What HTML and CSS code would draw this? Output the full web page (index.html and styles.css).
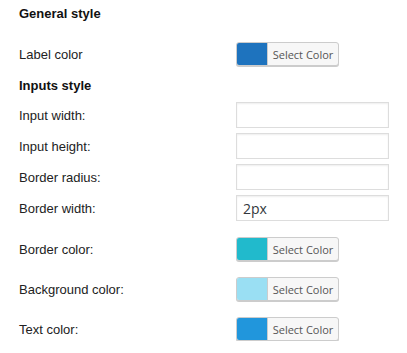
FILE: index.html
```html
<!DOCTYPE html>
<html lang="en">
<head>
  <meta charset="UTF-8" />
  <meta name="viewport" content="width=device-width, initial-scale=1" />
  <title>Form style settings</title>
  <link rel="stylesheet" href="styles.css">
</head>
<body>
  <div class="settings">
    <h3 class="section-title first">General style</h3>
    <div class="row color-row first-color">
      <label>Label color</label>
      <button type="button" class="color-btn">
        <span class="swatch" style="background:#1e73be"></span>
        <span class="btn-text">Select Color</span>
      </button>
    </div>

    <h3 class="section-title">Inputs style</h3>
    <div class="inputs">
      <div class="row">
        <label for="iw">Input width:</label>
        <input type="text" id="iw">
      </div>
      <div class="row">
        <label for="ih">Input height:</label>
        <input type="text" id="ih">
      </div>
      <div class="row">
        <label for="br">Border radius:</label>
        <input type="text" id="br">
      </div>
      <div class="row">
        <label for="bw">Border width:</label>
        <input type="text" id="bw" value="2px">
      </div>
    </div>

    <div class="colors">
      <div class="row color-row">
        <label>Border color:</label>
        <button type="button" class="color-btn">
          <span class="swatch" style="background:#21bacc"></span>
          <span class="btn-text">Select Color</span>
        </button>
      </div>
      <div class="row color-row">
        <label>Background color:</label>
        <button type="button" class="color-btn">
          <span class="swatch" style="background:#9adff3"></span>
          <span class="btn-text">Select Color</span>
        </button>
      </div>
      <div class="row color-row">
        <label>Text color:</label>
        <button type="button" class="color-btn">
          <span class="swatch" style="background:#2196dc"></span>
          <span class="btn-text">Select Color</span>
        </button>
      </div>
    </div>
  </div>
</body>
</html>
```

FILE: styles.css
```css
body {
  margin: 0;
  background-color: #fff;
  font-family: "Liberation Sans", Arial, sans-serif;
  font-size: 13px;
  color: #222;
}

.settings {
  padding-left: 19px;
}

.section-title {
  margin: 12px 0 8px;
  font-size: 13px;
  line-height: 16px;
  font-weight: bold;
  color: #111;
}

.section-title.first {
  margin: 6px 0 0;
}

.row {
  display: flex;
  align-items: center;
}

.row label {
  width: 217px;
  flex-shrink: 0;
}

.first-color {
  margin-top: 20px;
}

.inputs {
  display: flex;
  flex-direction: column;
  gap: 5px;
}

input[type="text"] {
  box-sizing: border-box;
  width: 153px;
  height: 26px;
  margin: 0;
  padding: 0 6px;
  border: 1px solid #ddd;
  box-shadow: inset 0 1px 2px rgba(0,0,0,0.07);
  font-family: "Open Sans", sans-serif;
  font-size: 14px;
  color: #32373c;
  outline: none;
}

.colors {
  display: flex;
  flex-direction: column;
  gap: 16px;
  margin-top: 16px;
}

.color-btn {
  display: flex;
  align-items: stretch;
  box-sizing: border-box;
  height: 24px;
  width: 103px;
  margin: 0;
  padding: 0;
  border: 1px solid #ccc;
  border-radius: 3px;
  background-color: #f7f7f7;
  box-shadow: 0 1px 0 #ccc;
  overflow: hidden;
  cursor: pointer;
}

.swatch {
  width: 30px;
  border-right: 1px solid #ccc;
}

.btn-text {
  flex: 1;
  display: flex;
  align-items: center;
  justify-content: center;
  font-family: "Open Sans", sans-serif;
  font-size: 11px;
  color: #555;
}
```
